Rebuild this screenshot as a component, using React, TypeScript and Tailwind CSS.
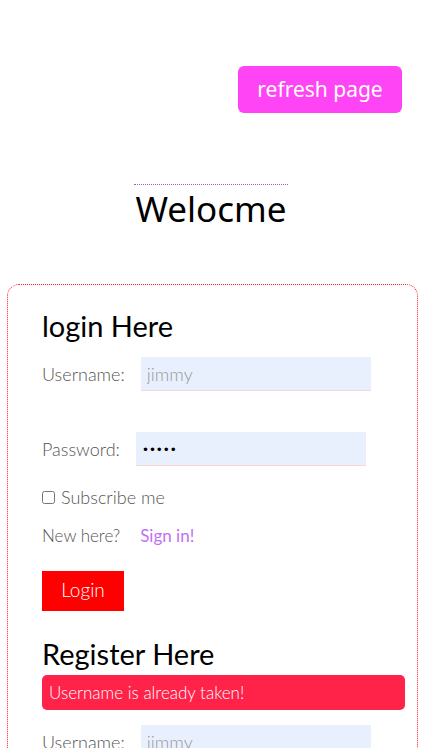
const Field = ({ label, value, type, inputClass }: { label: string; value: string; type: string; inputClass: string }) => {
  return (
    <div className="flex items-center">
      <label className="text-[18px] font-light text-[#555]">{label}</label>
      <input
        type={type}
        defaultValue={value}
        className={`h-[34px] w-[230px] bg-[#e8f0fe] border-b border-[#f5d5d5] px-[6px] font-light outline-none ${inputClass}`}
      />
    </div>
  );
};

const App = () => {
  return (
    <div className="min-h-[748px] bg-white font-['Lato',sans-serif] text-black overflow-hidden">
      <div className="flex justify-end pt-[66px] pr-[20px]">
        <button className="h-[47px] w-[164px] rounded-[6px] bg-[#ff44f5] text-[21px] text-white font-['Noto_Sans',sans-serif]">
          refresh page
        </button>
      </div>

      <div className="mt-[71px] flex justify-center">
        <h1 className="border-t border-dotted border-[#9a5cd0] px-[1px] pt-[3px] text-[35px] leading-[42px] font-['Noto_Sans',sans-serif]">
          Welocme
        </h1>
      </div>

      <div className="ml-[7px] mr-[4px] mt-[54px] rounded-[12px] border border-dotted border-[#ff2020] pl-[34px] pr-[12px] pt-[22px]">
        <h2 className="text-[29px] leading-[38px]">login Here</h2>
        <div className="mt-[12px]">
          <Field label="Username:" value="jimmy" type="text" inputClass="ml-[16px] text-[18px] text-[#999]" />
        </div>
        <div className="mt-[41px]">
          <Field label="Password:" value="jimmy" type="password" inputClass="ml-[16px] text-[12px] text-black" />
        </div>
        <div className="mt-[18px] flex items-center gap-[6px] text-[18px] font-light text-[#555]">
          <input type="checkbox" className="h-[13px] w-[13px]" />
          <span>Subscribe me</span>
        </div>
        <div className="mt-[12px] flex gap-[20px] text-[17px] font-light text-[#555]">
          <span>New here?</span>
          <a className="font-normal text-[#c070f5]">Sign in!</a>
        </div>
        <button className="mt-[22px] h-[40px] w-[82px] bg-[#ff0000] text-[19px] font-light text-white">Login</button>
        <h2 className="mt-[24px] text-[29px] leading-[38px]">Register Here</h2>
        <div className="mt-[2px] rounded-[5px] bg-[#ff2249] px-[7px] py-[5px] text-[17px] font-light text-white">
          Username is already taken!
        </div>
        <div className="mt-[15px]">
          <Field label="Username:" value="jimmy" type="text" inputClass="ml-[16px] text-[18px] text-[#999]" />
        </div>
        <div className="h-[60px]" />
      </div>
    </div>
  );
};

export default App;
